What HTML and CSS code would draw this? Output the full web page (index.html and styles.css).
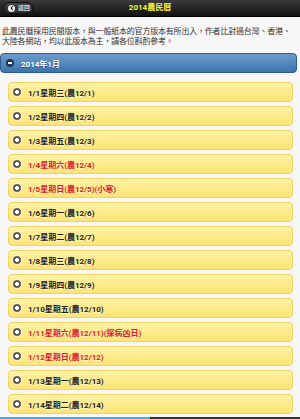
FILE: index.html
```html
<!DOCTYPE html>
<html lang="zh-Hant">
<head>
<meta charset="utf-8">
<title>2014農民曆</title>
<link rel="stylesheet" href="styles.css">
</head>
<body>
<header class="header">
  <a class="back" href="#">
    <span class="back-icon"><svg viewBox="0 0 10 10" width="6" height="6"><path d="M6 2.2 L3.4 5 L6 7.8" fill="none" stroke="#222" stroke-width="1.8" stroke-linecap="round" stroke-linejoin="round"/></svg></span>
    <span class="back-text">返回</span>
  </a>
  <h1 class="title">2014農民曆</h1>
  <span></span>
</header>
<p class="intro">此農民曆採用民間版本，與一般紙本的官方版本有所出入，作者比對過台灣、香港、大陸各網站，均以此版本為主，請各位斟酌參考。</p>
<div class="month"><span class="minus"></span>2014年1月</div>
<ul class="list">
  <li class="item"><span class="plus"></span>1/1星期三(農12/1)</li>
  <li class="item"><span class="plus"></span>1/2星期四(農12/2)</li>
  <li class="item"><span class="plus"></span>1/3星期五(農12/3)</li>
  <li class="item red"><span class="plus"></span>1/4星期六(農12/4)</li>
  <li class="item red"><span class="plus"></span>1/5星期日(農12/5)(小寒)</li>
  <li class="item"><span class="plus"></span>1/6星期一(農12/6)</li>
  <li class="item"><span class="plus"></span>1/7星期二(農12/7)</li>
  <li class="item"><span class="plus"></span>1/8星期三(農12/8)</li>
  <li class="item"><span class="plus"></span>1/9星期四(農12/9)</li>
  <li class="item"><span class="plus"></span>1/10星期五(農12/10)</li>
  <li class="item red"><span class="plus"></span>1/11星期六(農12/11)(探病凶日)</li>
  <li class="item red"><span class="plus"></span>1/12星期日(農12/12)</li>
  <li class="item"><span class="plus"></span>1/13星期一(農12/13)</li>
  <li class="item"><span class="plus"></span>1/14星期二(農12/14)</li>
</ul>
<div class="bottom-line"></div>
</body>
</html>
```
FILE: styles.css
```css
html, body {
  margin: 0;
  padding: 0;
}
body {
  width: 300px;
  height: 419px;
  overflow: hidden;
  background: #f7f7f7;
  font-family: "Roboto", "Noto Sans CJK TC", sans-serif;
}
.header {
  height: 17px;
  display: grid;
  grid-template-columns: 1fr auto 1fr;
  align-items: center;
  background: linear-gradient(#3a3a3a, #121212);
  border-bottom: 1px solid #000;
  box-sizing: border-box;
}
.back {
  justify-self: start;
  margin-left: 3px;
  width: 30px;
  height: 12px;
  box-sizing: border-box;
  border: 1px solid #0c0c0c;
  border-radius: 7px;
  background: linear-gradient(#454545, #2a2a2a);
  display: flex;
  align-items: center;
  gap: 3px;
  padding-left: 4px;
  text-decoration: none;
}
.back-icon {
  width: 7px;
  height: 7px;
  border-radius: 50%;
  background: #f0f0f0;
  display: flex;
  align-items: center;
  justify-content: center;
}
.back-text {
  font-size: 6px;
  line-height: 6px;
  color: #ddd;
  font-weight: bold;
}
.title {
  margin: 0;
  font-size: 8px;
  line-height: 10px;
  font-weight: bold;
  color: #f8f832;
}
.intro {
  margin: 0;
  padding: 10px 6px 0 2px;
  font-size: 8px;
  line-height: 10px;
  letter-spacing: -0.2px;
  color: #333;
}
.month {
  margin: 6px 3px 0 0;
  height: 20px;
  box-sizing: border-box;
  border: 1px solid #2d5c8c;
  border-radius: 4px;
  background: linear-gradient(#6b9cce, #3f74aa);
  display: flex;
  align-items: center;
  gap: 7px;
  padding-left: 5px;
  color: #fff;
  font-size: 8px;
  font-weight: bold;
  text-shadow: 0 1px 0 #2a5580;
}
.minus {
  width: 8px;
  height: 8px;
  border-radius: 50%;
  background: #1d3752;
  position: relative;
  flex: none;
}
.minus::after {
  content: "";
  position: absolute;
  left: 2px;
  top: 3.2px;
  width: 4px;
  height: 1.6px;
  background: #fff;
}
.list {
  list-style: none;
  margin: 0;
  padding: 9px 7px 0 8px;
  display: flex;
  flex-direction: column;
  gap: 4px;
}
.item {
  height: 20px;
  box-sizing: border-box;
  border: 1px solid #f2d260;
  border-radius: 4px;
  background: linear-gradient(#fff2a6, #fee474);
  display: flex;
  align-items: center;
  gap: 7px;
  padding-left: 4px;
  color: #222;
  font-size: 8px;
  font-weight: bold;
  text-shadow: 0 1px 0 rgba(255, 255, 255, 0.6);
}
.item.red {
  color: #dd2020;
}
.plus {
  width: 8px;
  height: 8px;
  border-radius: 50%;
  background: #5e5e5e;
  box-shadow: 0 0 0 1px rgba(255, 255, 255, 0.5);
  position: relative;
  flex: none;
}
.plus::before,
.plus::after {
  content: "";
  position: absolute;
  background: #fff;
}
.plus::before {
  left: 1.8px;
  top: 3.2px;
  width: 4.4px;
  height: 1.6px;
}
.plus::after {
  left: 3.2px;
  top: 1.8px;
  width: 1.6px;
  height: 4.4px;
}
.bottom-line {
  position: fixed;
  left: 0;
  bottom: 0;
  width: 300px;
  height: 2px;
  background: linear-gradient(to right, #33b5e5 0, #33b5e5 50%, #333 50%, #333 100%);
}
```
